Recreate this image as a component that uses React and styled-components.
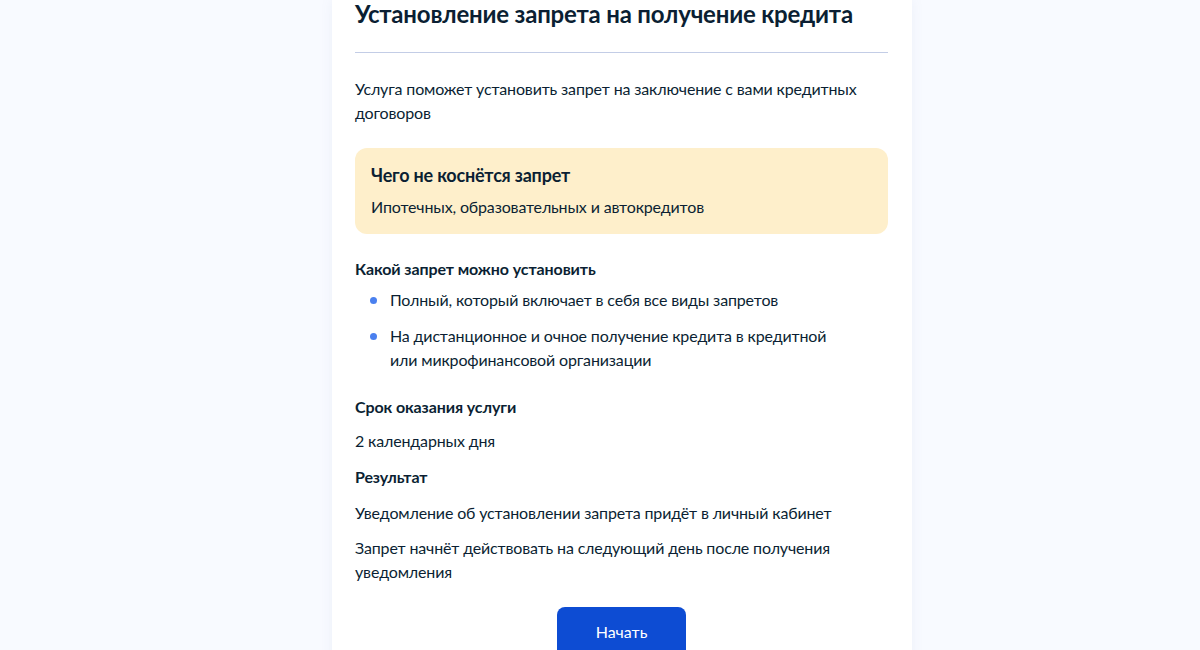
import React from "react";
import styled, { createGlobalStyle } from "styled-components";

const GlobalStyle = createGlobalStyle`
  html, body {
    margin: 0;
    padding: 0;
    background: #f8faff;
    font-family: Lato, "Noto Sans", sans-serif;
    color: #0b1f33;
    -webkit-font-smoothing: antialiased;
  }
  * { box-sizing: border-box; }
`;

const Page = styled.div`
  display: flex;
  padding-left: 332px;
  min-height: 650px;
`;

const Card = styled.main`
  width: 580px;
  background: #fff;
  padding: 0 24px 40px 23px;
  box-shadow: 0 0 12px rgba(102, 128, 180, 0.08);
  display: flex;
  flex-direction: column;
`;

const Title = styled.h1`
  margin: 0;
  font-size: 24px;
  line-height: 28px;
  font-weight: 700;
  letter-spacing: -0.2px;
`;

const Divider = styled.hr`
  border: none;
  height: 1px;
  background: #c3cde6;
  margin: 24px 0 24px;
`;

const Text = styled.p`
  margin: ${(p) => p.$mt || 0}px 0 0;
  font-size: 16px;
  line-height: 24px;
  letter-spacing: -0.15px;
`;

const Heading = styled.h3`
  margin: ${(p) => p.$mt || 0}px 0 0;
  font-size: 16px;
  line-height: 24px;
  font-weight: 700;
  letter-spacing: -0.1px;
`;

const Notice = styled.section`
  margin-top: 23px;
  background: #feefcb;
  border-radius: 12px;
  padding: 15px 16px;
  display: flex;
  flex-direction: column;
  gap: 8px;
`;

const NoticeTitle = styled.h2`
  margin: 0;
  font-size: 18px;
  line-height: 24px;
  font-weight: 700;
  letter-spacing: -0.2px;
`;

const List = styled.ul`
  list-style: none;
  margin: 7px 0 0;
  padding: 0 0 0 15px;
  display: flex;
  flex-direction: column;
  gap: 12px;
`;

const Item = styled.li`
  display: flex;
  align-items: flex-start;
  gap: 13px;
  font-size: 16px;
  line-height: 24px;
  letter-spacing: -0.15px;
  max-width: 470px;

  &::before {
    content: "";
    flex: none;
    width: 7px;
    height: 7px;
    border-radius: 50%;
    background: #4a80ef;
    margin-top: 9px;
  }
`;

const Actions = styled.div`
  display: flex;
  justify-content: center;
  margin-top: 23px;
`;

const Button = styled.button`
  font-family: inherit;
  font-size: 16px;
  line-height: 24px;
  color: #fff;
  background: #0d4cd3;
  border: none;
  border-radius: 8px;
  height: 52px;
  padding: 0 39px 3px;
  cursor: pointer;
`;

export default function App() {
  return (
    <>
      <GlobalStyle />
      <Page>
        <Card>
          <Title>Установление запрета на получение кредита</Title>
          <Divider />
          <Text>
            Услуга поможет установить запрет на заключение с вами кредитных
            договоров
          </Text>
          <Notice>
            <NoticeTitle>Чего не коснётся запрет</NoticeTitle>
            <Text>Ипотечных, образовательных и автокредитов</Text>
          </Notice>
          <Heading $mt={23}>Какой запрет можно установить</Heading>
          <List>
            <Item>Полный, который включает в себя все виды запретов</Item>
            <Item>
              На дистанционное и очное получение кредита в кредитной или
              микрофинансовой организации
            </Item>
          </List>
          <Heading $mt={23}>Срок оказания услуги</Heading>
          <Text $mt={10}>2 календарных дня</Text>
          <Heading $mt={12}>Результат</Heading>
          <Text $mt={12}>
            Уведомление об установлении запрета придёт в личный кабинет
          </Text>
          <Text $mt={11}>
            Запрет начнёт действовать на следующий день после получения
            уведомления
          </Text>
          <Actions>
            <Button>Начать</Button>
          </Actions>
        </Card>
      </Page>
    </>
  );
}
